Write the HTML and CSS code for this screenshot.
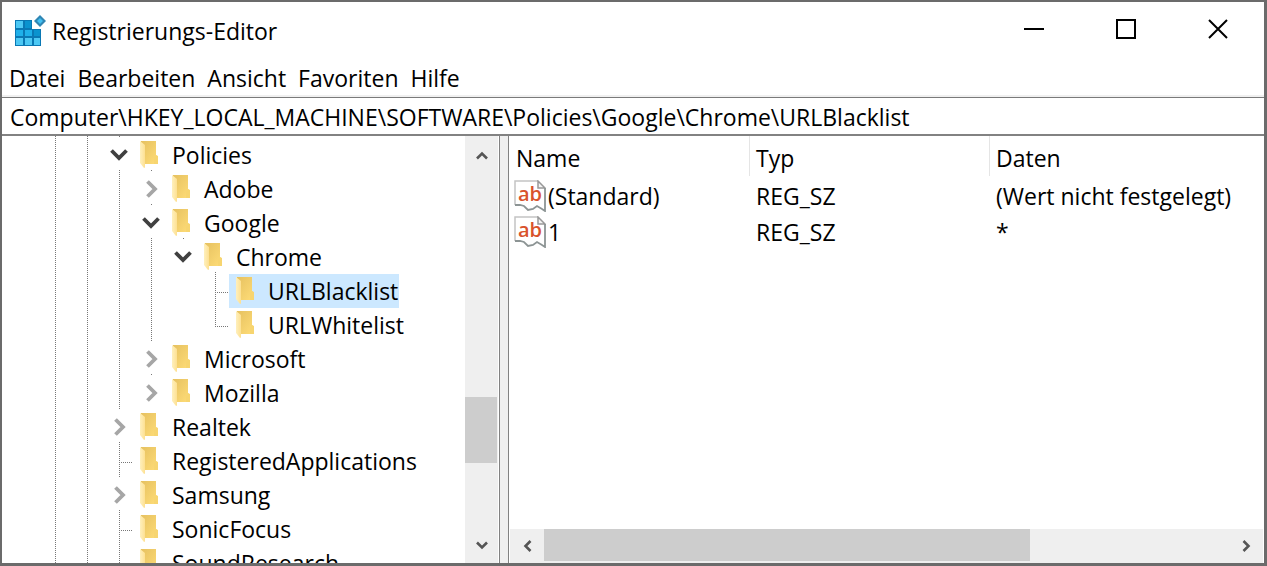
FILE: index.html
```
<!DOCTYPE html>
<html lang="de">
	<head>
		<meta charset="UTF-8">
		<title>Registrierungs-Editor</title>
		<link rel="stylesheet" href="styles.css">
	</head>
	<body>
		<!-- shared icons -->
		<svg class="defs" width="0" height="0">
			<defs>
				<linearGradient id="back" x1="0" y1="0" x2="1" y2="1">
					<stop offset="0" stop-color="#e6c160"/>
					<stop offset="1" stop-color="#ffdd78"/>
				</linearGradient>
				<linearGradient id="flap" x1="0" y1="0" x2="1" y2="0">
					<stop offset="0" stop-color="#fff0bd"/>
					<stop offset="1" stop-color="#fde092"/>
				</linearGradient>
			</defs>
			<symbol id="folder" viewBox="0 0 19 28">
				<path d="M1 0h15v14l2 2v7H1z" fill="url(#back)"/>
				<path d="M16 14l2 1v8h-4v-6z" fill="#f7d570"/>
				<path d="M0 0l5 4v22.500l-1 .5-4-5z" fill="url(#flap)"/>
			</symbol>
			<symbol id="open" viewBox="0 0 18 12">
				<path d="M1.500 1.500L9 9l7.500-7.500" fill="none" stroke="#404040" stroke-width="3.800"/>
			</symbol>
			<symbol id="closed" viewBox="0 0 12 18">
				<path d="M1.500 1.500L9 9l-7.500 7.500" fill="none" stroke="#a6a6a6" stroke-width="3.800"/>
			</symbol>
			<symbol id="arrow" viewBox="0 0 12 12">
				<path d="M1 8.500L6 3.500l5 5" fill="none" stroke="#555" stroke-width="2.600"/>
			</symbol>
			<symbol id="string" viewBox="0 0 32 32">
				<path d="M1 25V1h23l7 7v22l-3-1-5-3-4 3-5 1-3-3-4-2-3-1z" fill="#fff"/>
				<path d="M1 25V1h23" fill="none" stroke="#c4c4c4" stroke-width="1.500"/>
				<path d="M24 1v7h7z" fill="#f4f4f4" stroke="#999" stroke-width="1.500"/>
				<path d="M31 8v23l-3-2-5-3-4 3-5 1-4-4-4-1H1" fill="none" stroke="#8c9494" stroke-width="1.800"/>
			</symbol>
		</svg>

		<div class="window">
			<header class="titlebar">
				<svg class="logo" viewBox="0 0 32 32">
					<path d="M1 5h17v9h9v17H1z" fill="#0a78b4"/>
					<path d="M2 6h7v7H2zM2 23h7v7H2zM11 23h7v7h-7zM20 23h6v7h-6z" fill="#4cc8f4"/>
					<path d="M11 6h6v7h-6zM20 15h6v6h-6z" fill="#0a93cf"/>
					<path d="M2 15h7v6H2zM11 15h7v6h-7z" fill="#1fb0ea"/>
					<path d="M26 0l6 6-6 6-6-6z" fill="#2f86b4"/>
					<path d="M26 3l3 3-3 3-3-3z" fill="#43c0f2"/>
				</svg>
				<h1>Registrierungs-Editor</h1>
				<div class="controls">
					<button type="button" aria-label="Minimieren"><svg viewBox="0 0 20 20"><path d="M0 10h20"/></svg></button>
					<button type="button" aria-label="Maximieren"><svg viewBox="0 0 20 20"><path d="M1 1h18v18H1z"/></svg></button>
					<button type="button" aria-label="Schließen"><svg viewBox="0 0 20 20"><path d="M1 1l18 18M19 1L1 19"/></svg></button>
				</div>
			</header>

			<nav class="menu">
				<button type="button">Datei</button>
				<button type="button">Bearbeiten</button>
				<button type="button">Ansicht</button>
				<button type="button">Favoriten</button>
				<button type="button">Hilfe</button>
			</nav>

			<input class="address" type="text" aria-label="Adresse" value="Computer\HKEY_LOCAL_MACHINE\SOFTWARE\Policies\Google\Chrome\URLBlacklist">

			<main class="panes">
				<section class="tree-pane">
					<ul class="tree">
						<li><i class="line"></i><i class="line"></i><button type="button" class="toggle" aria-label="Policies zuklappen"><svg class="down"><use href="#open"/></svg></button><span class="key parent"><svg class="folder"><use href="#folder"/></svg>Policies</span></li>
						<li><i class="line"></i><i class="line"></i><i class="line"></i><button type="button" class="toggle" aria-label="Adobe aufklappen"><svg class="right"><use href="#closed"/></svg></button><span class="key"><svg class="folder"><use href="#folder"/></svg>Adobe</span></li>
						<li><i class="line"></i><i class="line"></i><i class="line"></i><button type="button" class="toggle" aria-label="Google zuklappen"><svg class="down"><use href="#open"/></svg></button><span class="key parent"><svg class="folder"><use href="#folder"/></svg>Google</span></li>
						<li><i class="line"></i><i class="line"></i><i class="line"></i><i class="line"></i><button type="button" class="toggle last" aria-label="Chrome zuklappen"><svg class="down"><use href="#open"/></svg></button><span class="key parent"><svg class="folder"><use href="#folder"/></svg>Chrome</span></li>
						<li><i class="line"></i><i class="line"></i><i class="line"></i><i class="line"></i><i></i><i class="line branch"></i><span class="key selected"><svg class="folder"><use href="#folder"/></svg>URLBlacklist</span></li>
						<li><i class="line"></i><i class="line"></i><i class="line"></i><i class="line"></i><i></i><i class="line branch end"></i><span class="key"><svg class="folder"><use href="#folder"/></svg>URLWhitelist</span></li>
						<li><i class="line"></i><i class="line"></i><i class="line"></i><button type="button" class="toggle" aria-label="Microsoft aufklappen"><svg class="right"><use href="#closed"/></svg></button><span class="key"><svg class="folder"><use href="#folder"/></svg>Microsoft</span></li>
						<li><i class="line"></i><i class="line"></i><i class="line"></i><button type="button" class="toggle last" aria-label="Mozilla aufklappen"><svg class="right"><use href="#closed"/></svg></button><span class="key"><svg class="folder"><use href="#folder"/></svg>Mozilla</span></li>
						<li><i class="line"></i><i class="line"></i><button type="button" class="toggle" aria-label="Realtek aufklappen"><svg class="right"><use href="#closed"/></svg></button><span class="key"><svg class="folder"><use href="#folder"/></svg>Realtek</span></li>
						<li><i class="line"></i><i class="line"></i><i class="line branch"></i><span class="key"><svg class="folder"><use href="#folder"/></svg>RegisteredApplications</span></li>
						<li><i class="line"></i><i class="line"></i><button type="button" class="toggle" aria-label="Samsung aufklappen"><svg class="right"><use href="#closed"/></svg></button><span class="key"><svg class="folder"><use href="#folder"/></svg>Samsung</span></li>
						<li><i class="line"></i><i class="line"></i><i class="line branch"></i><span class="key"><svg class="folder"><use href="#folder"/></svg>SonicFocus</span></li>
						<li><i class="line"></i><i class="line"></i><i class="line branch"></i><span class="key"><svg class="folder"><use href="#folder"/></svg>SoundResearch</span></li>
					</ul>
					<div class="scroll vertical">
						<button type="button" aria-label="Nach oben"><svg><use href="#arrow"/></svg></button>
						<div class="track"><div class="thumb"></div></div>
						<button type="button" aria-label="Nach unten"><svg class="flip"><use href="#arrow"/></svg></button>
					</div>
				</section>

				<div class="splitter"></div>

				<section class="value-pane">
					<div class="values">
						<table>
							<thead>
								<tr><th class="name">Name</th><th class="type">Typ</th><th>Daten</th></tr>
							</thead>
							<tbody>
								<tr>
									<td><span class="value"><svg viewBox="0 0 32 32"><use href="#string"/><text x="4" y="21">ab</text></svg>(Standard)</span></td>
									<td>REG_SZ</td>
									<td>(Wert nicht festgelegt)</td>
								</tr>
								<tr>
									<td><span class="value"><svg viewBox="0 0 32 32"><use href="#string"/><text x="4" y="21">ab</text></svg>1</span></td>
									<td>REG_SZ</td>
									<td>*</td>
								</tr>
							</tbody>
						</table>
					</div>
					<div class="scroll horizontal">
						<button type="button" aria-label="Nach links"><svg class="to-left"><use href="#arrow"/></svg></button>
						<div class="track"><div class="thumb"></div></div>
						<button type="button" aria-label="Nach rechts"><svg class="to-right"><use href="#arrow"/></svg></button>
					</div>
				</section>
			</main>
		</div>
	</body>
</html>
```
FILE: styles.css
```
*{
	margin: 0;
	padding: 0;
	box-sizing: border-box;
}
body{
	font: 23px/34px "Open Sans", "Noto Sans", sans-serif;
	color: #000;
	background: #fff;
}
ul{
	list-style: none;
}
button,input{
	font: inherit;
	color: inherit;
	border: none;
	background: none;
}
svg{
	display: block;
	flex: none;
}
.defs{
	position: absolute;
}
.window{
	height: 100vh;
	display: flex;
	flex-direction: column;
	border: 2px solid #6b6b6b;
	border-width: 2px 3px 3px 2px;
	overflow: hidden;
}

/* title bar */
.titlebar{
	display: flex;
	align-items: center;
	height: 57px;
	flex: none;
	padding-left: 12px;
}
.logo{
	width: 32px;
	height: 32px;
}
.titlebar h1{
	flex: 1;
	margin-left: 6px;
	font-size: 23px;
	font-weight: normal;
}
.controls{
	display: flex;
	height: 54px;
	align-self: flex-start;
}
.controls button{
	width: 92px;
	display: flex;
	align-items: center;
	justify-content: center;
}
.controls svg{
	width: 20px;
	height: 20px;
	fill: none;
	stroke: #000;
	stroke-width: 2;
}

/* menu */
.menu{
	display: flex;
	flex: none;
	gap: 12px;
	height: 38px;
	padding: 1px 0 0 7px;
	border-bottom: 2px solid #f0f0f0;
}
.address{
	flex: none;
	width: 100%;
	height: 39px;
	padding: 2px 8px 0;
	border-top: 1px solid #7a7a7a;
	border-bottom: 2px solid #828282;
	outline: none;
}

/* tree */
.panes{
	flex: 1;
	display: flex;
	min-height: 0;
}
.tree-pane{
	display: flex;
	flex: none;
	width: 498px;
	padding-right: 1px;
	border-right: 1px solid #828282;
}
.tree{
	flex: 1;
	overflow: hidden;
	padding: 2px 0 0 35px;
	/* guide lines running in from above the first row */
	background:
		linear-gradient(#777, #777) 53px 0 / 1px 1px no-repeat,
		linear-gradient(#777, #777) 85px 0 / 1px 1px no-repeat,
		linear-gradient(#777, #777) 117px 0 / 1px 1px no-repeat;
}
.tree li{
	display: flex;
	height: 34px;
	white-space: nowrap;
}
.tree i,.toggle{
	width: 32px;
	flex: none;
	position: relative;
}
.line,.toggle,.parent{
	background: repeating-linear-gradient(#777 0 1px, transparent 1px 2px) 18px 0 / 1px 100% no-repeat;
}
.end{
	background-size: 1px 18px;
}
.branch::after{
	content: "";
	position: absolute;
	left: 18px;
	right: 0;
	top: 18px;
	height: 1px;
	background: repeating-linear-gradient(90deg, #777 0 1px, transparent 1px 2px);
}
.toggle{
	display: flex;
	align-items: center;
	justify-content: flex-end;
	background-position: 18px 100%;
	background-size: 1px 2px;
}
.parent{
	background-position: 18px 100%;
	background-size: 1px 2px;
}
.last{
	background: none;
}
.down{
	width: 18px;
	height: 12px;
	margin-right: 5px;
}
.right{
	width: 12px;
	height: 18px;
	margin-right: 7px;
}
.key{
	display: flex;
	align-items: center;
	gap: 13px;
	padding: 0 1px 0 7px;
}
.folder{
	width: 19px;
	height: 28px;
}
.selected{
	background-color: #cce8ff;
}

/* scroll bars */
.scroll{
	display: flex;
	flex: none;
	background: #efefef;
}
.scroll button{
	display: flex;
	align-items: center;
	justify-content: center;
	width: 33px;
	height: 34px;
}
.scroll svg{
	width: 12px;
	height: 12px;
}
.track{
	flex: 1;
}
.thumb{
	background: #cdcdcd;
}
.vertical{
	flex-direction: column;
	width: 33px;
	padding: 3px 0 1px;
}
.vertical .track{
	display: flex;
	flex-direction: column;
}
.vertical .track::before{
	content: "";
	height: 63%;
}
.vertical .thumb{
	width: 32px;
	height: 66px;
}
.horizontal{
	height: 34px;
	padding: 0 1px;
}
.horizontal button{
	height: 33px;
}
.horizontal .thumb{
	width: 71%;
	height: 32px;
}
.flip{
	transform: rotate(180deg);
}
.to-left{
	transform: rotate(-90deg);
}
.to-right{
	transform: rotate(90deg);
}

/* values */
.splitter{
	flex: none;
	width: 9px;
	background: #f0f0f0;
	border-right: 1px solid #828282;
}
.value-pane{
	flex: 1;
	min-width: 0;
	display: flex;
	flex-direction: column;
	padding: 0 1px;
}
.values{
	flex: 1;
	min-height: 0;
	overflow: hidden;
}
.values table{
	width: 100%;
	table-layout: fixed;
	border-collapse: separate;
	border-spacing: 0;
	white-space: nowrap;
}
.values th{
	height: 42px;
	padding: 2px 0 0 6px;
	text-align: left;
	font-weight: normal;
	background: linear-gradient(#e5e5e5, #e5e5e5) 100% 0 / 1px 40px no-repeat;
}
.values th:last-child{
	background: none;
}
.name,.type{
	width: 240px;
}
.values td{
	height: 36px;
	padding-left: 6px;
}
.values td:first-child{
	padding-left: 4px;
}
.value{
	display: flex;
	align-items: center;
	gap: 2px;
}
.value svg{
	width: 32px;
	height: 32px;
}
.value text{
	font: 600 20px "Open Sans", "Noto Sans", sans-serif;
	fill: #d9532c;
}
```
